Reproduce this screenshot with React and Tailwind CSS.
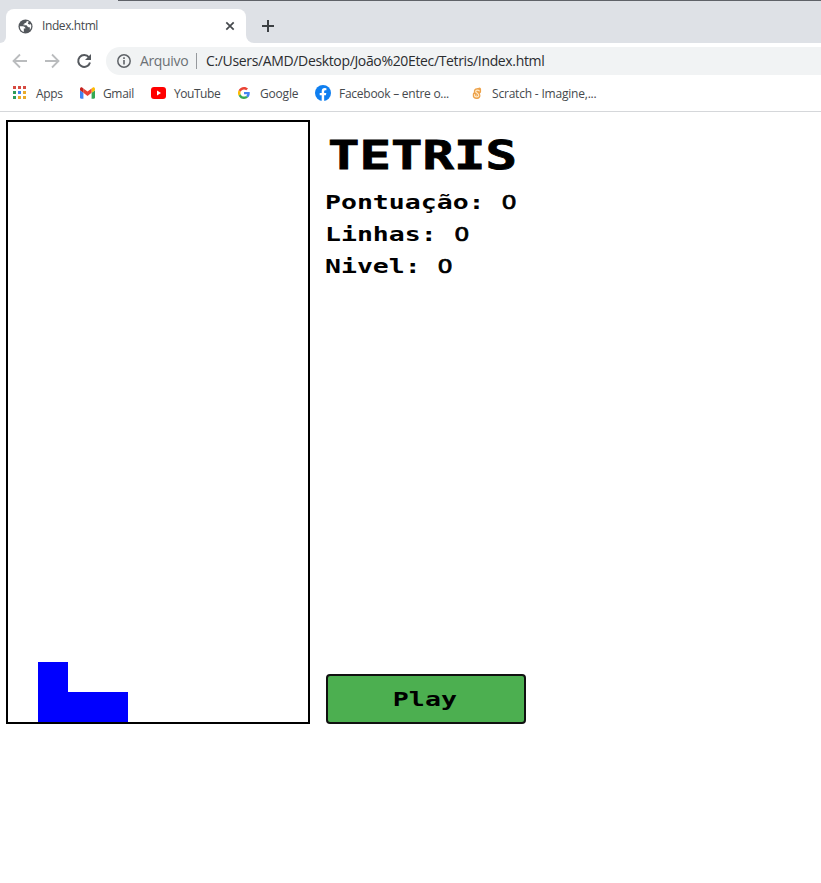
import React from "react";

const ui = "font-['Open_Sans','Noto_Sans',sans-serif] whitespace-nowrap";
const pixel = "font-['DejaVu_Sans_Mono','Liberation_Mono',monospace] font-bold whitespace-pre text-black";

function Globe() {
  return (
    <svg className="w-[15px] h-[15px] shrink-0" viewBox="0 0 16 16">
      <circle cx="8" cy="8" r="7.5" fill="#53575c" />
      <path d="M1.900 7.800H5.200C6.700 7.800 7.900 8.800 7.900 10.200H6.200V13.900C3.600 13.100 1.900 10.800 1.900 7.800ZM9.300 2C9.300 3.600 8.500 4.200 6.900 4.300V5.900H5.700V6.700H8.700C9.900 6.700 10.100 8.700 11.200 8.900H12.600V11.800C14.400 9.600 14.600 7.400 13.600 5.300 12.400 6.300 10.700 5.900 10.500 4.600 10.400 3.800 11 3.300 11.800 3.200 11.100 2.500 10.200 2.100 9.300 2Z" fill="#fff" />
    </svg>
  );
}

function AppsIcon() {
  const colors = ["#d64a41", "#d64a41", "#d64a41", "#2e9c5b", "#4384f0", "#e9ab2b", "#2e9c5b", "#e9ab2b", "#e9ab2b"];
  return (
    <div className="grid grid-cols-3 gap-[2px] w-[13px] mb-px shrink-0">
      {colors.map((c, i) => <span key={i} className="w-[3px] h-[3px]" style={{ background: c }} />)}
    </div>
  );
}

function Gmail() {
  return (
    <svg className="w-[15px] h-[12px] shrink-0" viewBox="52 42 88 66">
      <path fill="#4285f4" d="M58 108h14V74L52 59v43c0 3.32 2.69 6 6 6" />
      <path fill="#34a853" d="M120 108h14c3.32 0 6-2.69 6-6V59l-20 15" />
      <path fill="#fbbc04" d="M120 48v26l20-15v-8c0-7.42-8.47-11.65-14.4-7.2" />
      <path fill="#ea4335" d="M72 74V48l24 18 24-18v26L96 92" />
      <path fill="#c5221f" d="M52 51v8l20 15V48l-5.600-4.200c-5.940-4.450-14.400-.22-14.400 7.200" />
    </svg>
  );
}

function YouTube() {
  return (
    <svg className="w-[15px] h-[12px] shrink-0" viewBox="0 0 15 12">
      <rect width="15" height="12" rx="3" fill="#f00" />
      <path d="M6 3.500v5L10 6Z" fill="#fff" />
    </svg>
  );
}

function Google() {
  return (
    <svg className="w-[12px] h-[12px] shrink-0" viewBox="0 0 48 48">
      <path fill="#EA4335" d="M24 9.500c3.540 0 6.710 1.220 9.210 3.600l6.850-6.850C35.900 2.380 30.470 0 24 0 14.620 0 6.510 5.380 2.560 13.220l7.980 6.190C12.430 13.720 17.740 9.500 24 9.500z" />
      <path fill="#4285F4" d="M46.980 24.550c0-1.570-.15-3.090-.38-4.550H24v9.020h12.940c-.58 2.960-2.260 5.480-4.780 7.180l7.730 6c4.510-4.180 7.090-10.360 7.090-17.650z" />
      <path fill="#FBBC05" d="M10.530 28.590a14.500 14.500 0 0 1 0-9.180l-7.980-6.190a24 24 0 0 0 0 21.560z" />
      <path fill="#34A853" d="M24 48c6.480 0 11.930-2.130 15.890-5.810l-7.730-6c-2.150 1.450-4.920 2.300-8.160 2.300-6.260 0-11.570-4.220-13.470-9.910l-7.980 6.190C6.510 42.620 14.620 48 24 48z" />
    </svg>
  );
}

function Facebook() {
  return (
    <svg className="w-[16px] h-[16px] shrink-0" viewBox="0 0 16 16">
      <circle cx="8" cy="8" r="8" fill="#0f7ff0" />
      <path d="M6.700 15.900V10.300H4.700V8h2V6.300C6.700 4.200 7.900 3.100 9.700 3.100l1.700.15v1.900h-1c-.95 0-1.250.6-1.250 1.200V8h2.150l-.35 2.300h-1.800v5.600Z" fill="#fff" />
    </svg>
  );
}

function Scratch() {
  return (
    <svg className="w-[10px] h-[13px] shrink-0" viewBox="0 0 10 13">
      <path d="M7.400 3.700C6.300 2.300 3.500 2.600 3.500 4.400 3.500 6.300 7 6 6.800 8.500 6.600 10.700 3.800 10.700 2.500 9.300V7M7.400 2.300v2.400" fill="none" stroke="#eda24b" strokeWidth="3.400" strokeLinecap="round" strokeLinejoin="round" />
      <path d="M7.300 3.900C6.300 2.700 3.800 2.700 3.700 4.400 3.700 6.200 6.900 6.100 6.700 8.500 6.500 10.300 3.700 10.300 2.600 9V7.500" fill="none" stroke="#ffe9c6" strokeWidth="1.200" strokeLinecap="round" />
    </svg>
  );
}

function Bookmark({ icon, label, box, gap, spacing }) {
  return (
    <div className={`flex shrink-0 items-center h-[18px] ${box} ${gap}`}>
      {icon}
      <span className={`${ui} mt-px text-[12px] leading-[18px] text-[#45494d] ${spacing}`}>{label}</span>
    </div>
  );
}

function Stat({ label }) {
  return (
    <div className="flex h-8 items-center">
      <div className={`${pixel} origin-left -ml-px text-[19px] leading-8 scale-x-[1.395]`}>
        {label}: <span className="inline-block w-[11.440px] text-center font-['DejaVu_Sans'] font-normal scale-x-[.9] [-webkit-text-stroke:.7px_black]">0</span>
      </div>
    </div>
  );
}

export default function App() {
  return (
    <div className="w-[821px] h-[883px] bg-white overflow-hidden flex flex-col">
      <div className="h-[43px] shrink-0 bg-[#dee1e6] flex flex-col">
        <div className="ml-[118px] h-px shrink-0 bg-[#5f6268]" />
        <div className="flex flex-1 items-end">
          <div className="w-[6px] h-[8px] bg-white"><div className="size-full bg-[#dee1e6] rounded-br-[8px]" /></div>
          <div className="w-[240px] h-[34px] rounded-t-[8px] bg-white flex items-center pl-3 pr-[11px]">
            <Globe />
            <span className={`${ui} ml-[9px] text-[12px] leading-4 text-[#45494d] tracking-[-.4px]`}>Index.html</span>
            <svg className="ml-auto size-[10px]" viewBox="0 0 10 10"><path d="m1.300 1.300 7.400 7.400m0-7.400L1.300 8.700" stroke="#45494d" strokeWidth="1.700" /></svg>
          </div>
          <div className="w-[8px] h-[8px] bg-white"><div className="size-full bg-[#dee1e6] rounded-bl-[8px]" /></div>
          <svg className="ml-[8px] mb-[11px] size-[12px]" viewBox="0 0 12 12"><path d="M6 0v12M0 6h12" stroke="#3c4043" strokeWidth="2" /></svg>
        </div>
      </div>
      <div className="h-[36px] shrink-0 flex items-center pl-[12px]">
        <svg className="size-4" viewBox="0 0 16 16"><path d="M15 8H2m6-6.500L1.500 8 8 14.500" fill="none" stroke="#babcbe" strokeWidth="1.800" /></svg>
        <svg className="ml-4 size-4" viewBox="0 0 16 16"><path d="M1 8h13M8 1.500 14.500 8 8 14.500" fill="none" stroke="#babcbe" strokeWidth="1.800" /></svg>
        <svg className="ml-4 size-4" viewBox="0 0 16 16"><path d="M13 4.300A6 6 0 1 0 14 9.500" fill="none" stroke="#55595e" strokeWidth="2" /><path d="M15 1v6H9Z" fill="#55595e" /></svg>
        <div className="ml-[14px] h-7 flex-1 rounded-l-full bg-[#f1f3f4] flex items-center pl-[11px]">
          <svg className="size-[14px]" viewBox="0 0 14 14"><circle cx="7" cy="7" r="6.200" fill="none" stroke="#5f6368" strokeWidth="1.500" /><path d="M7 6v4.500M7 3.300v1.600" stroke="#5f6368" strokeWidth="1.600" /></svg>
          <span className={`${ui} ml-[9px] w-[48px] text-[14px] leading-5 text-[#6c7075] tracking-[-.35px]`}>Arquivo</span>
          <span className="ml-2 w-px h-4 bg-[#96999d]" />
          <span className={`${ui} ml-[9px] text-[14px] leading-5 text-[#2b2d30] tracking-[-.35px]`}>C:/Users/AMD/Desktop/João%20Etec/Tetris/Index.html</span>
        </div>
      </div>
      <div className="h-[33px] shrink-0 border-b border-[#d5d7da] flex items-start pt-[5px] pl-[13px]">
        <Bookmark icon={<AppsIcon />} label="Apps" box="w-[67px]" gap="gap-[10px]" spacing="tracking-[-.3px]" />
        <Bookmark icon={<Gmail />} label="Gmail" box="w-[71px]" gap="gap-[8px]" spacing="tracking-[-.35px]" />
        <Bookmark icon={<YouTube />} label="YouTube" box="w-[87px]" gap="gap-[8px]" spacing="tracking-[-.45px]" />
        <Bookmark icon={<Google />} label="Google" box="w-[77px]" gap="gap-[10px]" spacing="tracking-[-.2px]" />
        <Bookmark icon={<Facebook />} label="Facebook – entre o..." box="w-[157px]" gap="gap-[8px]" spacing="tracking-[-.26px]" />
        <Bookmark icon={<Scratch />} label="Scratch - Imagine,..." box="w-[140px]" gap="gap-[10px]" spacing="tracking-[-.2px]" />
      </div>
      <main className="flex pl-[6px] pt-[8px]">
        <div className="w-[304px] h-[604px] border-2 border-black flex flex-col justify-end pl-[30px]">
          <div className="size-[30px] bg-[#00f]" />
          <div className="w-[90px] h-[30px] bg-[#00f]" />
        </div>
        <div className="ml-4 w-[200px] h-[604px] flex flex-col">
          <h1 className={`${pixel} origin-left ml-[2px] h-[66px] text-[39px] leading-[72px] scale-x-[1.342] [-webkit-text-stroke:.8px_black]`}>TETRIS</h1>
          <Stat label="Pontuação" />
          <Stat label="Linhas" />
          <Stat label="Nivel" />
          <button className="mt-auto h-[50px] w-full rounded-[4px] border-2 border-[#101010] bg-[#4caf50] flex items-center justify-center">
            <span className={`${pixel} origin-center mr-[2px] mb-px text-[19px] leading-6 scale-x-[1.399]`}>Play</span>
          </button>
        </div>
      </main>
    </div>
  );
}
